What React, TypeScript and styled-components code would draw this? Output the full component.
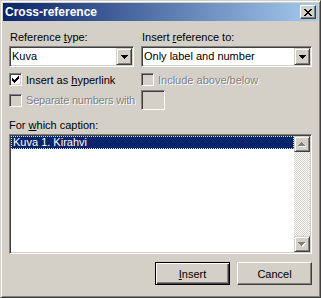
import React from 'react';
import styled, { createGlobalStyle } from 'styled-components';

const GlobalStyle = createGlobalStyle`
  html, body { margin: 0; padding: 0; background: #d4d0c8; }
  body {
    font-family: "Liberation Sans", Arial, sans-serif;
    font-size: 11px;
    color: #000;
  }
`;

const Window = styled.div`
  box-sizing: border-box;
  width: 321px;
  height: 298px;
  background: #d4d0c8;
  border: 1px solid;
  border-color: #d4d0c8 #404040 #404040 #d4d0c8;
  box-shadow: inset 1px 1px #fff, inset -1px -1px #808080;
  padding: 2px;
  display: flex;
  flex-direction: column;
`;

const TitleBar = styled.div`
  height: 18px;
  flex: none;
  display: flex;
  align-items: center;
  justify-content: space-between;
  padding: 0 2px;
  background: linear-gradient(to right, #0a246a, #a6caf0);
`;

const TitleText = styled.span`
  color: #fff;
  font-weight: bold;
  font-size: 12px;
  white-space: nowrap;
`;

const raised = `
  background: #d4d0c8;
  border: 1px solid;
  border-color: #fff #404040 #404040 #fff;
  box-shadow: inset -1px -1px #808080;
`;

const sunken = `
  border: 1px solid;
  border-color: #808080 #fff #fff #808080;
  box-shadow: inset 1px 1px #404040, inset -1px -1px #d4d0c8;
`;

const CloseButton = styled.div`
  box-sizing: border-box;
  width: 16px;
  height: 14px;
  ${raised}
  display: flex;
  align-items: center;
  justify-content: center;
  padding-right: 1px;
`;

const Body = styled.div`
  flex: 1;
  display: flex;
  flex-direction: column;
  padding: 10px 6px 0 6px;
`;

const TopGrid = styled.div`
  display: grid;
  grid-template-columns: 125px 171px;
  column-gap: 7px;
  align-items: center;
`;

const Label = styled.div<{ $indent?: number; $top?: number }>`
  height: 13px;
  line-height: 13px;
  white-space: nowrap;
  padding-left: ${(p) => p.$indent ?? 0}px;
  margin-top: ${(p) => p.$top ?? 0}px;
`;

const Key = styled.span`
  text-decoration: underline;
`;

const Combo = styled.div`
  box-sizing: border-box;
  height: 21px;
  margin-top: 2px;
  background: #fff;
  ${sunken}
  padding: 1px;
  display: flex;
`;

const ComboText = styled.div`
  flex: 1;
  line-height: 17px;
  padding-left: 1px;
  white-space: nowrap;
  overflow: hidden;
`;

const ArrowButton = styled.div<{ $w: number; $h: number }>`
  box-sizing: border-box;
  width: ${(p) => p.$w}px;
  height: ${(p) => p.$h}px;
  flex: none;
  ${raised}
  box-shadow: inset 1px 1px #fff, inset -1px -1px #808080;
  border-color: #d4d0c8 #404040 #404040 #d4d0c8;
  display: flex;
  align-items: center;
  justify-content: center;
`;

const CheckRow = styled.div<{ $top?: number; $disabled?: boolean; $tight?: boolean }>`
  display: flex;
  align-items: center;
  gap: 4px;
  height: 13px;
  margin-top: ${(p) => p.$top ?? 0}px;
  white-space: nowrap;
  letter-spacing: ${(p) => (p.$tight ? '-0.2px' : 'normal')};
  color: ${(p) => (p.$disabled ? '#808080' : '#000')};
  text-shadow: ${(p) => (p.$disabled ? '1px 1px 0 #fff' : 'none')};
`;

const CheckBox = styled.div<{ $disabled?: boolean }>`
  box-sizing: border-box;
  width: 13px;
  height: 13px;
  flex: none;
  background: ${(p) => (p.$disabled ? '#d4d0c8' : '#fff')};
  ${sunken}
  display: flex;
  align-items: center;
  justify-content: center;
`;

const SmallField = styled.div`
  box-sizing: border-box;
  width: 24px;
  height: 20px;
  margin-top: 4px;
  background: #d4d0c8;
  ${sunken}
`;

const ListBox = styled.div`
  box-sizing: border-box;
  height: 120px;
  margin-top: 2px;
  background: #fff;
  ${sunken}
  padding: 1px;
  display: flex;
`;

const Items = styled.div`
  flex: 1;
`;

const Item = styled.div<{ $selected?: boolean }>`
  box-sizing: border-box;
  height: 13px;
  line-height: 11px;
  padding-left: 1px;
  white-space: nowrap;
  background: ${(p) => (p.$selected ? '#0a246a' : 'transparent')};
  color: ${(p) => (p.$selected ? '#fff' : '#000')};
  border: 1px dotted ${(p) => (p.$selected ? '#f5db95' : 'transparent')};
`;

const ScrollBar = styled.div`
  width: 16px;
  flex: none;
  display: flex;
  flex-direction: column;
`;

const Track = styled.div`
  flex: 1;
  background: repeating-conic-gradient(#fff 0 25%, #d4d0c8 0 50%) 0 0 / 2px 2px;
`;

const ButtonRow = styled.div`
  display: flex;
  justify-content: flex-end;
  gap: 7px;
  margin-top: 8px;
`;

const PushButton = styled.div<{ $default?: boolean }>`
  box-sizing: border-box;
  width: 75px;
  height: 23px;
  display: flex;
  align-items: center;
  justify-content: center;
  background: #d4d0c8;
  border: 1px solid;
  border-color: ${(p) => (p.$default ? '#000' : '#fff #404040 #404040 #fff')};
  box-shadow: ${(p) =>
    p.$default
      ? 'inset 1px 1px #fff, inset -1px -1px #404040, inset -2px -2px #808080'
      : 'inset -1px -1px #808080'};
`;

const Pixels = ({ rows, color, shadow }: { rows: string[]; color: string; shadow?: string }) => {
  const w = rows[0].length + (shadow ? 1 : 0);
  const h = rows.length + (shadow ? 1 : 0);
  const rects: React.ReactNode[] = [];
  const draw = (dx: number, fill: string, key: string) =>
    rows.forEach((r, y) =>
      r.split('').forEach((c, x) => {
        if (c === 'X') rects.push(<rect key={`${key}${x}-${y}`} x={x + dx} y={y + dx} width={1} height={1} fill={fill} />);
      })
    );
  if (shadow) draw(1, shadow, 's');
  draw(0, color, 'm');
  return (
    <svg width={w} height={h} viewBox={`0 0 ${w} ${h}`} shapeRendering="crispEdges" style={{ display: 'block' }}>
      {rects}
    </svg>
  );
};

const CLOSE = ['XX....XX', '.XX..XX.', '..XXXX..', '...XX...', '..XXXX..', '.XX..XX.', 'XX....XX'];
const CHECK = ['......X', '.....XX', 'X...XXX', 'XX.XXX.', 'XXXXX..', '.XXX...', '..X....'];
const DOWN = ['XXXXXXX', '.XXXXX.', '..XXX..', '...X...'];
const UP = ['...X...', '..XXX..', '.XXXXX.', 'XXXXXXX'];

export default function App() {
  return (
    <>
      <GlobalStyle />
      <Window>
        <TitleBar>
          <TitleText>Cross-reference</TitleText>
          <CloseButton>
            <Pixels rows={CLOSE} color="#000" />
          </CloseButton>
        </TitleBar>
        <Body>
          <TopGrid>
            <Label $indent={1}>
              Reference <Key>t</Key>ype:
            </Label>
            <Label $indent={1}>
              Insert <Key>r</Key>eference to:
            </Label>
            <Combo>
              <ComboText>Kuva</ComboText>
              <ArrowButton $w={16} $h={17}>
                <Pixels rows={DOWN} color="#000" />
              </ArrowButton>
            </Combo>
            <Combo>
              <ComboText>Only label and number</ComboText>
              <ArrowButton $w={16} $h={17}>
                <Pixels rows={DOWN} color="#000" />
              </ArrowButton>
            </Combo>
            <CheckRow $top={6}>
              <CheckBox>
                <Pixels rows={CHECK} color="#000" />
              </CheckBox>
              <span>
                Insert as <Key>h</Key>yperlink
              </span>
            </CheckRow>
            <CheckRow $top={6} $disabled>
              <CheckBox $disabled />
              <span>Include above/below</span>
            </CheckRow>
            <CheckRow $top={4} $disabled $tight>
              <CheckBox $disabled />
              <span>Separate numbers with</span>
            </CheckRow>
            <SmallField />
          </TopGrid>
          <Label $top={9}>
            For <Key>w</Key>hich caption:
          </Label>
          <ListBox>
            <Items>
              <Item $selected>Kuva 1. Kirahvi</Item>
            </Items>
            <ScrollBar>
              <ArrowButton $w={16} $h={16}>
                <Pixels rows={UP} color="#808080" shadow="#fff" />
              </ArrowButton>
              <Track />
              <ArrowButton $w={16} $h={16}>
                <Pixels rows={DOWN} color="#808080" shadow="#fff" />
              </ArrowButton>
            </ScrollBar>
          </ListBox>
          <ButtonRow>
            <PushButton $default>
              <span>
                <Key>I</Key>nsert
              </span>
            </PushButton>
            <PushButton>Cancel</PushButton>
          </ButtonRow>
        </Body>
      </Window>
    </>
  );
}
